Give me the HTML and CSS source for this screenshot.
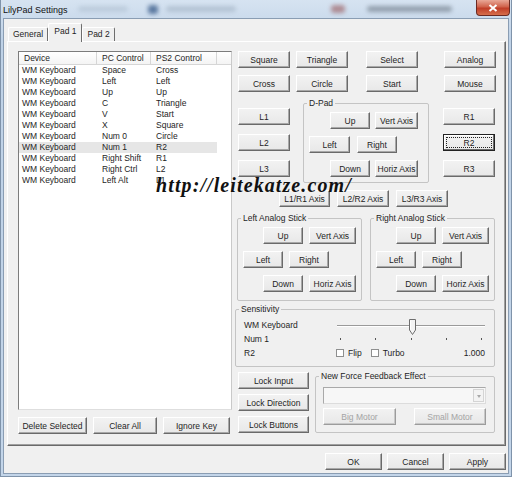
FILE: index.html
```html
<!DOCTYPE html>
<html lang="en">
<head>
  <meta charset="UTF-8" />
  <meta name="viewport" content="width=device-width, initial-scale=1.0" />
  <title>LilyPad Settings</title>
  <link rel="stylesheet" href="styles.css">
</head>
<body>
<div class="window">

  <!-- Title bar (aero glass) -->
  <div class="titlebar">
    <span class="title">LilyPad Settings</span>
    <span class="glass g1"></span>
    <span class="glass g2"></span>
    <span class="glass g3"></span>
    <span class="glass g4"></span>
    <span class="glass g5"></span>
    <div class="close">
      <svg width="10" height="8" viewBox="0 0 10 8"><path d="M1.5 1 L8.5 7 M8.5 1 L1.5 7" stroke="#fff" stroke-width="2"/></svg>
    </div>
  </div>

  <div class="client">
    <!-- Tabs -->
    <div class="tabs">
      <div class="tab">General</div>
      <div class="tab active">Pad 1</div>
      <div class="tab">Pad 2</div>
    </div>

    <div class="panel">
      <!-- Binding list -->
      <div class="left-col">
        <div class="list">
          <div class="list-head">
            <span>Device</span><span>PC Control</span><span>PS2 Control</span><span></span>
          </div>
          <div class="list-row"><span>WM Keyboard</span><span>Space</span><span>Cross</span></div>
          <div class="list-row"><span>WM Keyboard</span><span>Left</span><span>Left</span></div>
          <div class="list-row"><span>WM Keyboard</span><span>Up</span><span>Up</span></div>
          <div class="list-row"><span>WM Keyboard</span><span>C</span><span>Triangle</span></div>
          <div class="list-row"><span>WM Keyboard</span><span>V</span><span>Start</span></div>
          <div class="list-row"><span>WM Keyboard</span><span>X</span><span>Square</span></div>
          <div class="list-row"><span>WM Keyboard</span><span>Num 0</span><span>Circle</span></div>
          <div class="list-row sel"><span>WM Keyboard</span><span>Num 1</span><span>R2</span></div>
          <div class="list-row"><span>WM Keyboard</span><span>Right Shift</span><span>R1</span></div>
          <div class="list-row"><span>WM Keyboard</span><span>Right Ctrl</span><span>L2</span></div>
          <div class="list-row"><span>WM Keyboard</span><span>Left Alt</span><span>L1</span></div>
        </div>
        <div class="list-btns">
          <button class="btn w-del">Delete Selected</button>
          <button class="btn w-clear">Clear All</button>
          <button class="btn w-ignore">Ignore Key</button>
        </div>
      </div>

      <!-- Pad buttons -->
      <div class="right-col">
        <div class="face-row">
          <button class="btn">Square</button>
          <button class="btn">Triangle</button>
          <button class="btn">Select</button>
          <button class="btn">Analog</button>
        </div>
        <div class="face-row second">
          <button class="btn">Cross</button>
          <button class="btn">Circle</button>
          <button class="btn">Start</button>
          <button class="btn">Mouse</button>
        </div>

        <div class="mid">
          <div class="shoulder">
            <button class="btn">L1</button>
            <button class="btn">L2</button>
            <button class="btn">L3</button>
          </div>
          <fieldset class="group dpad">
            <legend>D-Pad</legend>
            <div class="pad-row r-up">
              <button class="btn w40">Up</button>
              <button class="btn w43">Vert Axis</button>
            </div>
            <div class="pad-row r-mid">
              <button class="btn w41">Left</button>
              <button class="btn w40">Right</button>
            </div>
            <div class="pad-row r-up">
              <button class="btn w40">Down</button>
              <button class="btn w43">Horiz Axis</button>
            </div>
          </fieldset>
          <div class="shoulder right">
            <button class="btn">R1</button>
            <button class="btn focus">R2</button>
            <button class="btn">R3</button>
          </div>
        </div>

        <div class="axis-row">
          <button class="btn w51">L1/R1 Axis</button>
          <button class="btn w52">L2/R2 Axis</button>
          <button class="btn w52">L3/R3 Axis</button>
        </div>

        <div class="sticks">
          <fieldset class="group stick">
            <legend>Left Analog Stick</legend>
            <div class="pad-row s-up">
              <button class="btn w40">Up</button>
              <button class="btn w47">Vert Axis</button>
            </div>
            <div class="pad-row s-mid">
              <button class="btn w40">Left</button>
              <button class="btn w40">Right</button>
            </div>
            <div class="pad-row s-up">
              <button class="btn w40">Down</button>
              <button class="btn w47">Horiz Axis</button>
            </div>
          </fieldset>
          <fieldset class="group stick">
            <legend>Right Analog Stick</legend>
            <div class="pad-row s-up">
              <button class="btn w40">Up</button>
              <button class="btn w47">Vert Axis</button>
            </div>
            <div class="pad-row s-mid">
              <button class="btn w40">Left</button>
              <button class="btn w40">Right</button>
            </div>
            <div class="pad-row s-up">
              <button class="btn w40">Down</button>
              <button class="btn w47">Horiz Axis</button>
            </div>
          </fieldset>
        </div>

        <fieldset class="group sens">
          <legend>Sensitivity</legend>
          <div class="sens-grid">
            <span>WM Keyboard</span>
            <div class="slider">
              <div class="track"></div>
              <div class="ticks"><i></i><i></i><i></i><i></i><i></i></div>
              <svg class="thumb" width="7" height="16" viewBox="0 0 7 16">
                <path d="M0.5 0.5 H6.5 V11 L3.5 15.5 L0.5 11 Z" fill="#f4f4f4" stroke="#6e6e6e"/>
                <path d="M1.5 1.5 V10.6" stroke="#fff"/>
              </svg>
            </div>
            <span>Num 1</span>
            <span>R2</span>
            <div class="sens-opts">
              <span class="box"></span><span class="chk-label">Flip</span>
              <span class="box turbo"></span><span class="chk-label">Turbo</span>
              <span class="value">1.000</span>
            </div>
          </div>
        </fieldset>

        <div class="bottom">
          <div class="locks">
            <button class="btn">Lock Input</button>
            <button class="btn">Lock Direction</button>
            <button class="btn">Lock Buttons</button>
          </div>
          <fieldset class="group ff">
            <legend>New Force Feedback Effect</legend>
            <div class="combo"><span class="combo-arrow"></span></div>
            <div class="motors">
              <button class="btn disabled w73">Big Motor</button>
              <button class="btn disabled w72">Small Motor</button>
            </div>
          </fieldset>
        </div>
      </div>
    </div>

    <div class="dlg-btns">
      <button class="btn">OK</button>
      <button class="btn">Cancel</button>
      <button class="btn">Apply</button>
    </div>
  </div>

  <!-- watermark over the dialog -->
  <div class="watermark">http://leitekatze.com/</div>
</div>
</body>
</html>
```

FILE: styles.css
```css
/* Reset & Base */
* {
  margin: 0;
  padding: 0;
  box-sizing: border-box;
}
html, body {
  width: 512px;
  height: 477px;
  overflow: hidden;
}
body {
  font-family: 'Liberation Sans', Arial, sans-serif;
  font-size: 8.5px;
  color: #1e1e1e;
  background: #fff;
}

/* Window frame */
.window {
  position: relative;
  width: 512px;
  height: 477px;
  display: flex;
  flex-direction: column;
  background: linear-gradient(#d6e3f1, #bfd2e7 40px, #c3d5e9);
  border: 1px solid #7f93aa;
  border-top: none;
}
.titlebar {
  height: 18px;
  display: flex;
  align-items: center;
  padding-left: 2px;
}
.title {
  font-size: 9px;
  color: #111;
  margin-top: 1px;
}
.glass {
  height: 6px;
  border-radius: 3px;
  filter: blur(2px);
  opacity: 0.5;
}
.g1 { width: 50px; margin-left: 10px; background: #a9bacb; }
.g2 { width: 10px; height: 9px; margin-left: 20px; background: #2b4f80; opacity: 0.7; }
.g3 { width: 70px; margin-left: 8px; background: #98a9bb; }
.g4 { width: 14px; height: 8px; margin-left: 95px; background: #8c3b3b; }
.g5 { width: 85px; margin-left: 22px; background: #56616e; }
.close {
  margin-left: auto;
  margin-right: 1px;
  align-self: flex-start;
  width: 34px;
  height: 16px;
  display: flex;
  align-items: center;
  justify-content: center;
  border: 1px solid #6b2a22;
  border-top: none;
  border-radius: 0 0 4px 4px;
  background: linear-gradient(#e9a897, #d0634c 45%, #c03e28 55%, #d66f4c);
}

/* Client area */
.client {
  flex: 1;
  margin: 0 2px 2px;
  background: #f0f0f0;
  border: 1px solid #8a9db3;
  padding: 4px 2px 0 3px;
  display: flex;
  flex-direction: column;
}

/* Tabs */
.tabs {
  height: 18px;
  display: flex;
  align-items: flex-end;
  padding-left: 1px;
}
.tab {
  height: 14px;
  padding: 0 4px;
  line-height: 13px;
  border: 1px solid;
  border-color: #fff #6e6e6e transparent #fff;
  border-bottom: none;
  border-radius: 2px 2px 0 0;
}
.tab.active {
  height: 19px;
  margin-bottom: -1px;
  padding: 0 5px;
  line-height: 15px;
  background: #f0f0f0;
  position: relative;
  z-index: 1;
}

/* Tab panel */
.panel {
  height: 405px;
  border: 1px solid;
  border-color: #fff #6a6a6a #6a6a6a #fff;
  box-shadow: inset -1px -1px 0 #a0a0a0;
  padding: 9px 9px 0 10px;
  display: flex;
  gap: 6px;
}

/* Buttons */
.btn {
  height: 17px;
  font: inherit;
  color: #1e1e1e;
  background: linear-gradient(#f2f2f2, #e8e8e8);
  border: 1px solid;
  border-color: #fff #6a6a6a #6a6a6a #fff;
  box-shadow: inset -1px -1px 0 #a8a8a8;
  display: flex;
  align-items: center;
  justify-content: center;
  white-space: nowrap;
  flex-shrink: 0;
}
.btn.focus {
  border-color: #222;
  box-shadow: inset -1px -1px 0 #6a6a6a, inset 1px 1px 0 #fff;
  outline: 1px dotted #222;
  outline-offset: -4px;
}
.btn.disabled {
  color: #a4a4a4;
  border-color: #fff #9c9c9c #9c9c9c #fff;
  box-shadow: inset -1px -1px 0 #c8c8c8;
}
.w40 { width: 40px; }
.w41 { width: 41px; }
.w43 { width: 43px; }
.w47 { width: 47px; }
.w51 { width: 51px; }
.w52 { width: 52px; }
.w72 { width: 72px; }
.w73 { width: 73px; }

/* List view */
.left-col {
  width: 214px;
  display: flex;
  flex-direction: column;
}
.list {
  height: 359px;
  background: #fff;
  border: 1px solid;
  border-color: #7c7c7c #c9c9c9 #dedede #7c7c7c;
}
.list-head {
  display: grid;
  grid-template-columns: 78px 54px 66px 1fr;
  height: 13px;
  border-bottom: 1px solid #d6d6d6;
  background: linear-gradient(#fff, #f4f4f4);
}
.list-head span {
  padding-left: 5px;
  line-height: 12px;
  border-right: 1px solid #d6d6d6;
}
.list-head span:last-child { border-right: none; }
.list-row {
  display: grid;
  grid-template-columns: 78px 54px 66px;
  width: 198px;
  height: 11px;
  line-height: 11px;
  white-space: nowrap;
}
.list-row span { padding-left: 5px; }
.list-row span:first-child { padding-left: 3px; }
.list-row.sel { background: #e6e6e6; }
.list-btns {
  display: flex;
  gap: 6px;
  margin-top: 7px;
}
.w-del { width: 69px; }
.w-clear { width: 64px; }
.w-ignore { width: 67px; }

/* Right column */
.right-col {
  width: 258px;
  display: flex;
  flex-direction: column;
}
.face-row {
  display: grid;
  grid-template-columns: 58px 70px 78px 52px;
}
.face-row .btn { width: 52px; }
.face-row.second { margin-top: 7px; }

.mid {
  display: flex;
  margin-top: 6px;
}
.shoulder {
  width: 52px;
  padding-top: 10px;
  display: flex;
  flex-direction: column;
  gap: 9px;
}
.shoulder .btn { width: 52px; }
.shoulder.right { margin-left: 14px; }

/* Group boxes */
.group {
  border: 1px solid #c4c4c4;
  border-radius: 2px;
  padding: 4px 0 0 0;
  min-width: 0;
}
.group legend {
  margin-left: 3px;
  padding: 0 2px;
  line-height: 10px;
}
.pad-row {
  display: flex;
  margin-bottom: 7px;
}
.dpad {
  width: 126px;
  height: 85px;
  margin-left: 13px;
}
.dpad .r-up { padding-left: 26px; gap: 5px; }
.dpad .r-mid { padding-left: 5px; gap: 7px; }

.axis-row {
  display: flex;
  gap: 7px;
  margin-top: 7px;
  padding-left: 41px;
}

.sticks {
  display: flex;
  gap: 8px;
  margin-top: 6px;
  margin-left: -1px;
}
.stick {
  width: 125px;
  height: 88px;
}
.stick .s-up { padding-left: 25px; gap: 6px; }
.stick .s-mid { padding-left: 5px; gap: 6px; }

/* Sensitivity */
.sens {
  width: 260px;
  height: 63px;
  margin-top: 3px;
  margin-left: -3px;
}
.sens-grid {
  display: grid;
  grid-template-columns: 93px 148px;
  grid-template-rows: 14px 14px 14px;
  padding-left: 8px;
  line-height: 14px;
}
.slider {
  grid-column: 2;
  grid-row: 1 / span 2;
  position: relative;
}
.track {
  margin-top: 7px;
  height: 2px;
  border-top: 1px solid #9a9a9a;
  border-bottom: 1px solid #fff;
}
.ticks {
  display: flex;
  justify-content: space-between;
  padding: 0 3px;
  margin-top: 11px;
}
.ticks i {
  width: 1px;
  height: 2px;
  background: #555;
}
.thumb {
  position: absolute;
  left: 72px;
  top: 1px;
}
.sens-opts {
  grid-column: 2;
  display: flex;
  align-items: center;
  margin-left: -1px;
}
.box {
  width: 8px;
  height: 8px;
  background: #fff;
  border: 1px solid #8e8f8f;
}
.box.turbo { margin-left: 9px; }
.chk-label { margin-left: 4px; }
.value { margin-left: auto; }

/* Lock buttons & force feedback */
.bottom {
  display: flex;
  margin-top: 5px;
}
.locks {
  display: flex;
  flex-direction: column;
  gap: 5px;
}
.locks .btn { width: 71px; }
.ff {
  width: 180px;
  height: 62px;
  margin-left: 6px;
  margin-top: -1px;
  padding: 6px 0 0 7px;
}
.ff legend { margin-left: -4px; }
.combo {
  width: 163px;
  height: 17px;
  background: #f7f7f7;
  border: 1px solid;
  border-color: #a9a9a9 #dcdcdc #dcdcdc #a9a9a9;
  display: flex;
  justify-content: flex-end;
  padding: 1px;
}
.combo-arrow {
  width: 11px;
  border: 1px solid #d4d4d4;
  background: #f3f3f3;
  display: flex;
  align-items: center;
  justify-content: center;
}
.combo-arrow::after {
  content: "";
  border: 2px solid transparent;
  border-top: 3px solid #a8a8a8;
  margin-top: 3px;
}
.motors {
  display: flex;
  justify-content: space-between;
  width: 163px;
  margin-top: 4px;
}

/* Dialog buttons */
.dlg-btns {
  display: flex;
  justify-content: flex-end;
  gap: 5px;
  margin-top: 7px;
}
.dlg-btns .btn { width: 57px; }

/* Watermark */
.watermark {
  position: absolute;
  left: 155px;
  top: 175px;
  font-family: 'Liberation Serif', 'Times New Roman', serif;
  font-style: italic;
  font-weight: bold;
  font-size: 20px;
  line-height: 20px;
  letter-spacing: 1.1px;
  color: #111;
  white-space: nowrap;
}
```
